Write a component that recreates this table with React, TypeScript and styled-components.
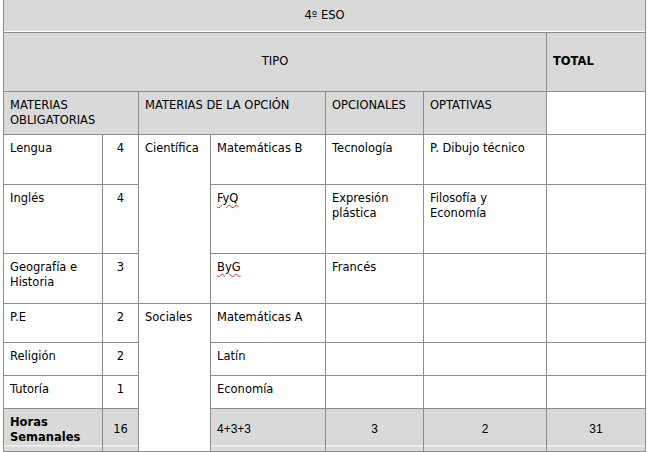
import React from "react";
import styled, { createGlobalStyle } from "styled-components";

const GlobalStyle = createGlobalStyle`
  html, body {
    margin: 0;
    padding: 0;
    background: #fff;
  }
`;

const Page = styled.div`
  padding: 0 0 0 3px;
`;

const Table = styled.table`
  border-collapse: collapse;
  table-layout: fixed;
  width: 643px;
  font-family: "DejaVu Sans", Verdana, sans-serif;
  font-size: 11.5px;
  line-height: 15px;
  color: #000;
`;

const Row = styled.tr<{ $h: number }>`
  height: ${(p) => p.$h}px;
`;

type CellProps = {
  $gray?: boolean;
  $center?: boolean;
  $middle?: boolean;
  $bold?: boolean;
  $arial?: boolean;
  $topLess?: boolean;
  $edge?: "top" | "bottom";
};

const Cell = styled.td<CellProps>`
  border: 1px solid #8c8c8c;
  ${(p) => (p.$topLess ? "border-top: none;" : "")}
  padding: ${(p) => (p.$middle ? "3px 6px" : "6px 6px 3px")};
  vertical-align: ${(p) => (p.$middle ? "middle" : "top")};
  text-align: ${(p) => (p.$center ? "center" : "left")};
  font-weight: ${(p) => (p.$bold ? 700 : 400)};
  ${(p) => (p.$arial ? `font-family: "Liberation Sans", Arial, sans-serif; font-size: 12px;` : "")}
  background: ${(p) =>
    !p.$gray
      ? "#fff"
      : p.$edge === "bottom"
      ? "linear-gradient(to bottom, #d9d9d9 calc(100% - 5px), #fff calc(100% - 5px), #fff calc(100% - 4px), #d9d9d9 calc(100% - 4px))"
      : "#d9d9d9"};
  ${(p) => (p.$edge === "top" ? "box-shadow: inset 0 -1px 0 #fff;" : "")}
  overflow: hidden;
`;

const Misspelled = styled.span`
  text-decoration: underline wavy #e02020;
  text-decoration-thickness: 1px;
  text-underline-offset: 2px;
`;

const widths = [99, 36, 72, 115, 98, 123, 99];

function App(): JSX.Element {
  return (
    <Page>
      <GlobalStyle />
      <Table>
        <colgroup>
          {widths.map((w, i) => (
            <col key={i} style={{ width: w }} />
          ))}
        </colgroup>
        <tbody>
          <Row $h={32}>
            <Cell colSpan={7} $gray $center $middle $topLess $edge="top">
              4º ESO
            </Cell>
          </Row>
          <Row $h={59}>
            <Cell colSpan={6} $gray $center $middle>
              TIPO
            </Cell>
            <Cell $gray $middle $bold>
              TOTAL
            </Cell>
          </Row>
          <Row $h={43}>
            <Cell colSpan={2} $gray>
              MATERIAS OBLIGATORIAS
            </Cell>
            <Cell colSpan={2} $gray>
              MATERIAS DE LA OPCIÓN
            </Cell>
            <Cell $gray>OPCIONALES</Cell>
            <Cell $gray>OPTATIVAS</Cell>
            <Cell></Cell>
          </Row>
          <Row $h={50}>
            <Cell>Lengua</Cell>
            <Cell $center>4</Cell>
            <Cell rowSpan={3}>Científica</Cell>
            <Cell>Matemáticas B</Cell>
            <Cell>Tecnología</Cell>
            <Cell>P. Dibujo técnico</Cell>
            <Cell></Cell>
          </Row>
          <Row $h={69}>
            <Cell>Inglés</Cell>
            <Cell $center>4</Cell>
            <Cell>
              <Misspelled>FyQ</Misspelled>
            </Cell>
            <Cell>Expresión plástica</Cell>
            <Cell>Filosofía y Economía</Cell>
            <Cell></Cell>
          </Row>
          <Row $h={50}>
            <Cell>Geografía e Historia</Cell>
            <Cell $center>3</Cell>
            <Cell>
              <Misspelled>ByG</Misspelled>
            </Cell>
            <Cell>Francés</Cell>
            <Cell></Cell>
            <Cell></Cell>
          </Row>
          <Row $h={39}>
            <Cell>P.E</Cell>
            <Cell $center>2</Cell>
            <Cell rowSpan={4}>Sociales</Cell>
            <Cell>Matemáticas A</Cell>
            <Cell></Cell>
            <Cell></Cell>
            <Cell></Cell>
          </Row>
          <Row $h={33}>
            <Cell>Religión</Cell>
            <Cell $center>2</Cell>
            <Cell>Latín</Cell>
            <Cell></Cell>
            <Cell></Cell>
            <Cell></Cell>
          </Row>
          <Row $h={33}>
            <Cell>Tutoría</Cell>
            <Cell $center>1</Cell>
            <Cell>Economía</Cell>
            <Cell></Cell>
            <Cell></Cell>
            <Cell></Cell>
          </Row>
          <Row $h={43}>
            <Cell $gray $bold $middle $edge="bottom">
              Horas Semanales
            </Cell>
            <Cell $gray $center $middle $edge="bottom">
              16
            </Cell>
            <Cell $gray $middle $arial $edge="bottom">
              4+3+3
            </Cell>
            <Cell $gray $center $middle $arial $edge="bottom">
              3
            </Cell>
            <Cell $gray $center $middle $arial $edge="bottom">
              2
            </Cell>
            <Cell $gray $center $middle $arial $edge="bottom">
              31
            </Cell>
          </Row>
        </tbody>
      </Table>
    </Page>
  );
}

export default App;
